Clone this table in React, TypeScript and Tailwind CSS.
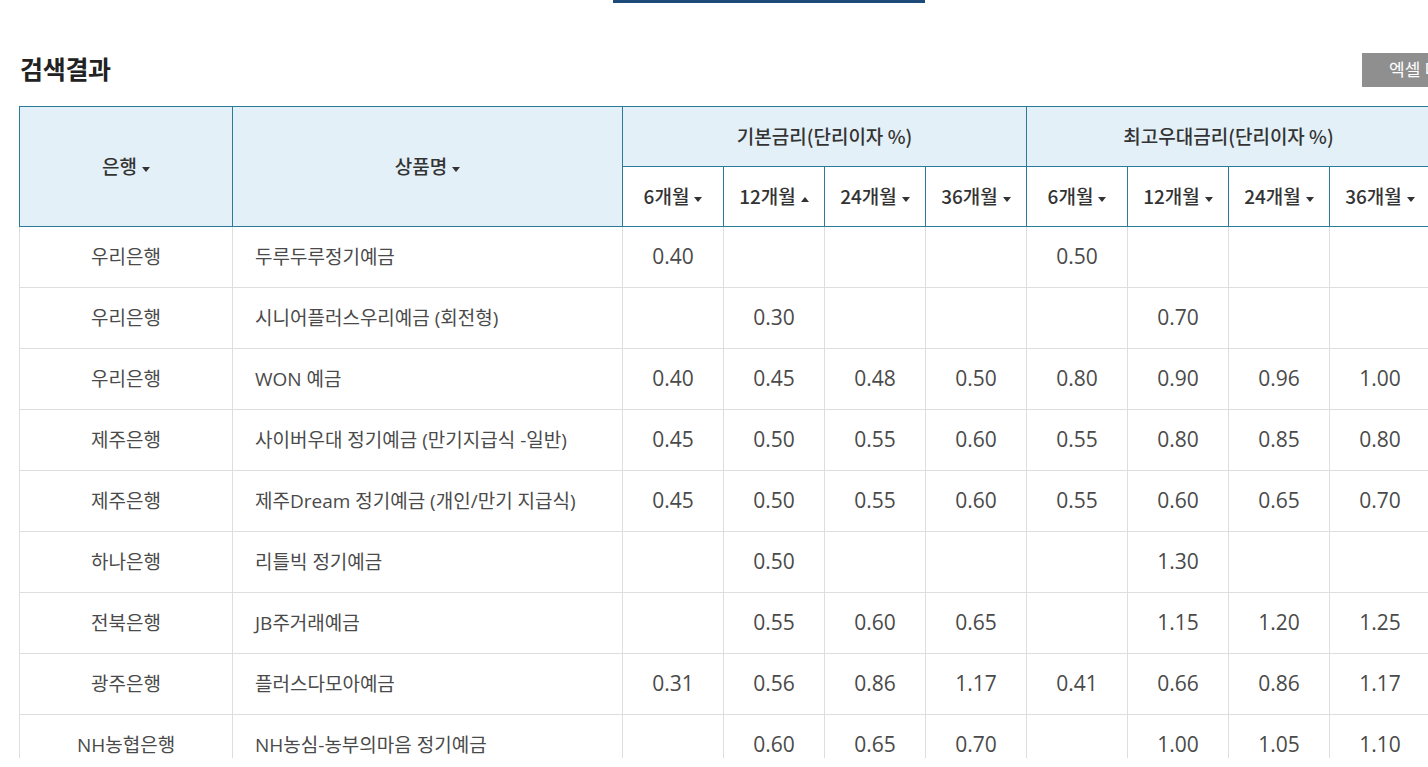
import React from "react";

type Row = { bank: string; name: string; base: string[]; best: string[] };

const ROWS: Row[] = [
  { bank: "우리은행", name: "두루두루정기예금", base: ["0.40", "", "", ""], best: ["0.50", "", "", ""] },
  { bank: "우리은행", name: "시니어플러스우리예금 (회전형)", base: ["", "0.30", "", ""], best: ["", "0.70", "", ""] },
  { bank: "우리은행", name: "WON 예금", base: ["0.40", "0.45", "0.48", "0.50"], best: ["0.80", "0.90", "0.96", "1.00"] },
  { bank: "제주은행", name: "사이버우대 정기예금 (만기지급식 -일반)", base: ["0.45", "0.50", "0.55", "0.60"], best: ["0.55", "0.80", "0.85", "0.80"] },
  { bank: "제주은행", name: "제주Dream 정기예금 (개인/만기 지급식)", base: ["0.45", "0.50", "0.55", "0.60"], best: ["0.55", "0.60", "0.65", "0.70"] },
  { bank: "하나은행", name: "리틀빅 정기예금", base: ["", "0.50", "", ""], best: ["", "1.30", "", ""] },
  { bank: "전북은행", name: "JB주거래예금", base: ["", "0.55", "0.60", "0.65"], best: ["", "1.15", "1.20", "1.25"] },
  { bank: "광주은행", name: "플러스다모아예금", base: ["0.31", "0.56", "0.86", "1.17"], best: ["0.41", "0.66", "0.86", "1.17"] },
  { bank: "NH농협은행", name: "NH농심-농부의마음 정기예금", base: ["", "0.60", "0.65", "0.70"], best: ["", "1.00", "1.05", "1.10"] },
];

const TERMS = ["6개월", "12개월", "24개월", "36개월"];

function Caret({ up }: { up?: boolean }) {
  return (
    <svg width="8" height="5" viewBox="0 0 8 5" className="ml-[5px] inline-block align-middle">
      {up ? <path d="M0 5 L4 0 L8 5 Z" fill="#333" /> : <path d="M0 0 L8 0 L4 5 Z" fill="#333" />}
    </svg>
  );
}

const th = "border border-[#2b7b98] font-medium text-[19px] text-[#333] font-['Noto_Sans_CJK_KR',sans-serif]";
const td = "border border-[#dedede] h-[61px] text-[19px] text-[#4a4a4a]";

export default function App() {
  return (
    <div className="w-[1428px] h-[767px] overflow-hidden bg-white" style={{ fontFamily: '"Open Sans", "Noto Sans CJK KR", sans-serif' }}>
      <div className="ml-[613px] w-[312px] h-[3px] bg-[#1d4a78]" />
      <div className="w-[1530px] pl-[19px]">
        <div className="mt-[50px] flex items-center h-[34px] w-[1483px]">
          <h2 className="flex-1 text-[25px] font-bold text-[#222] pl-px tracking-[-0.3px]">검색결과</h2>
          <button className="h-[34px] w-[140px] shrink-0 whitespace-nowrap bg-[#8f8f8f] text-white text-[17px] pl-[27px] text-left">엑셀 다운로드</button>
        </div>
        <div className="mt-[19px] h-[652px] overflow-hidden">
          <table className="border-collapse table-fixed w-[1411px]">
            <colgroup>
              <col className="w-[213px]" />
              <col className="w-[390px]" />
              {Array.from({ length: 8 }).map((_, i) => <col key={i} className="w-[101px]" />)}
            </colgroup>
            <thead>
              <tr className="h-[60px] bg-[#e4f0f7]">
                <th rowSpan={2} className={th}>은행<Caret /></th>
                <th rowSpan={2} className={th}>상품명<Caret /></th>
                <th colSpan={4} className={th}>기본금리(단리이자 %)</th>
                <th colSpan={4} className={th}>최고우대금리(단리이자 %)</th>
              </tr>
              <tr className="h-[60px] bg-white">
                {[0, 1].map((g) =>
                  TERMS.map((t, i) => (
                    <th key={`${g}-${t}`} className={th}>
                      {t}<Caret up={g === 0 && i === 1} />
                    </th>
                  ))
                )}
              </tr>
            </thead>
            <tbody>
              {ROWS.map((r, idx) => (
                <tr key={idx}>
                  <td className={`${td} text-center`}>{r.bank}</td>
                  <td className={`${td} pl-[22px] text-left`}>{r.name}</td>
                  {[...r.base, ...r.best].map((v, i) => (
                    <td key={i} className={`${td} text-center text-[21px]`}>{v}</td>
                  ))}
                </tr>
              ))}
            </tbody>
          </table>
        </div>
      </div>
    </div>
  );
}
